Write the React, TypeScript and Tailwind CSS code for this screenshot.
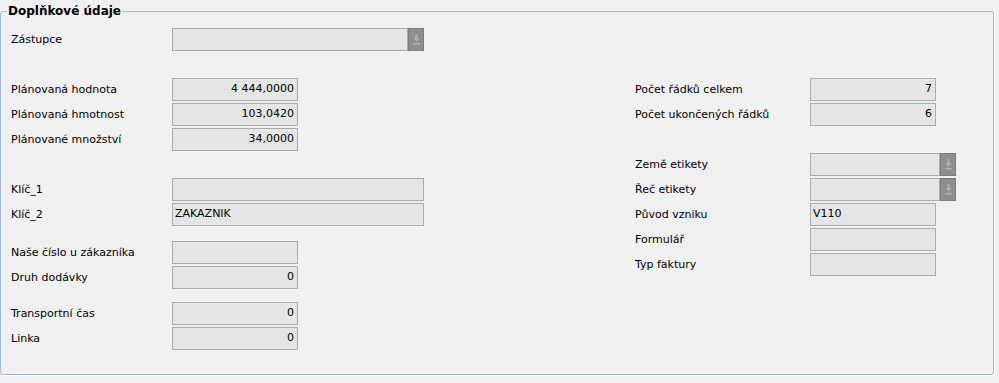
import React from "react";

const font = { fontFamily: '"DejaVu Sans", Tahoma, sans-serif' };

function Arrow() {
  return (
    <svg width="7" height="11" viewBox="0 0 7 11">
      <path d="M2.5 0h2v5h-2z" fill="#b0b0b0" />
      <path d="M0.5 4h6l-3 3.5z" fill="#b0b0b0" />
      <path d="M0 9h7v1.5H0z" fill="#b0b0b0" />
    </svg>
  );
}

function Field({ w, value = "", right = false }: { w: string; value?: string; right?: boolean }) {
  return (
    <div
      className={`${w} h-[23px] border border-[#ababab] bg-[#e5e5e5] flex items-center ${right ? "justify-end pr-[3px]" : "pl-[2px]"} text-[11px] text-black`}
    >
      {value}
    </div>
  );
}

function Combo({ w }: { w: string }) {
  return (
    <div className="flex h-[23px]">
      <div className={`${w} h-[23px] border border-[#ababab] bg-[#e5e5e5]`} />
      <div className="w-[16px] h-[23px] border border-[#7c7c7c] bg-[#8e8e8e] flex items-center justify-center">
        <Arrow />
      </div>
    </div>
  );
}

function Row({ label, children, lw, mt = "" }: { label: string; children: React.ReactNode; lw: string; mt?: string }) {
  return (
    <div className={`flex items-center h-[23px] ${mt}`}>
      <div className={`${lw} text-[11px] text-black whitespace-nowrap pt-[1px]`}>{label}</div>
      {children}
    </div>
  );
}

export default function App() {
  return (
    <div className="w-[999px] h-[383px] bg-[#f0f0f0] pt-[11px]" style={font}>
      <div className="relative w-[994px] h-[364px] border border-[#a2bcd8] rounded-[3px] shadow-[1px_1px_0_#ffffff] flex">
        <div className="absolute left-[6px] top-[-8px] bg-[#f0f0f0] px-[1px] text-[12px] font-bold text-black leading-[15px]">
          Doplňkové údaje
        </div>
        {/* left column */}
        <div className="flex flex-col pl-[10px] pt-[16px] w-[634px]">
          <Row label="Zástupce" lw="w-[161px]">
            <Combo w="w-[236px]" />
          </Row>
          <Row label="Plánovaná hodnota" lw="w-[161px]" mt="mt-[27px]">
            <Field w="w-[126px]" value="4 444,0000" right />
          </Row>
          <Row label="Plánovaná hmotnost" lw="w-[161px]" mt="mt-[2px]">
            <Field w="w-[126px]" value="103,0420" right />
          </Row>
          <Row label="Plánované množství" lw="w-[161px]" mt="mt-[2px]">
            <Field w="w-[126px]" value="34,0000" right />
          </Row>
          <Row label="Klíč_1" lw="w-[161px]" mt="mt-[27px]">
            <Field w="w-[252px]" />
          </Row>
          <Row label="Klíč_2" lw="w-[161px]" mt="mt-[2px]">
            <Field w="w-[252px]" value="ZAKAZNIK" />
          </Row>
          <Row label="Naše číslo u zákazníka" lw="w-[161px]" mt="mt-[15px]">
            <Field w="w-[126px]" />
          </Row>
          <Row label="Druh dodávky" lw="w-[161px]" mt="mt-[2px]">
            <Field w="w-[126px]" value="0" right />
          </Row>
          <Row label="Transportní čas" lw="w-[161px]" mt="mt-[13px]">
            <Field w="w-[126px]" value="0" right />
          </Row>
          <Row label="Linka" lw="w-[161px]" mt="mt-[2px]">
            <Field w="w-[126px]" value="0" right />
          </Row>
        </div>
        {/* right column */}
        <div className="flex flex-col pt-[66px]">
          <Row label="Počet řádků celkem" lw="w-[175px]">
            <Field w="w-[126px]" value="7" right />
          </Row>
          <Row label="Počet ukončených řádků" lw="w-[175px]" mt="mt-[2px]">
            <Field w="w-[126px]" value="6" right />
          </Row>
          <Row label="Země etikety" lw="w-[175px]" mt="mt-[27px]">
            <Combo w="w-[130px]" />
          </Row>
          <Row label="Řeč etikety" lw="w-[175px]" mt="mt-[2px]">
            <Combo w="w-[130px]" />
          </Row>
          <Row label="Původ vzniku" lw="w-[175px]" mt="mt-[2px]">
            <Field w="w-[126px]" value="V110" />
          </Row>
          <Row label="Formulář" lw="w-[175px]" mt="mt-[2px]">
            <Field w="w-[126px]" />
          </Row>
          <Row label="Typ faktury" lw="w-[175px]" mt="mt-[2px]">
            <Field w="w-[126px]" />
          </Row>
        </div>
      </div>
    </div>
  );
}
